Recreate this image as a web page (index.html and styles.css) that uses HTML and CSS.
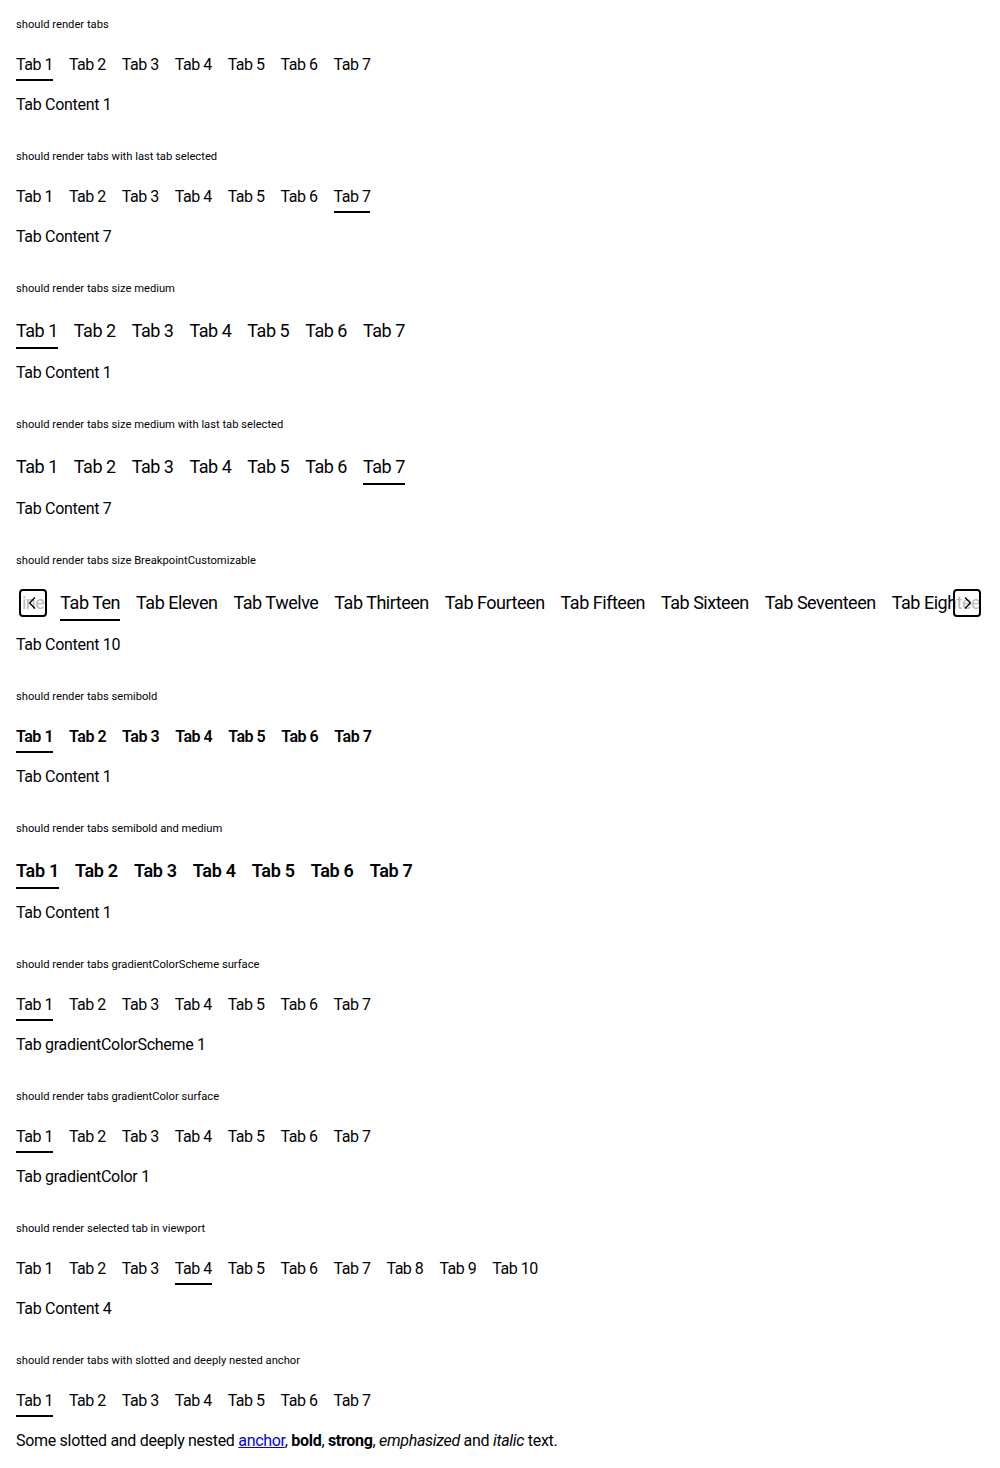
FILE: index.html
```html
<!DOCTYPE html>
<html lang="en">
<head>
<meta charset="utf-8">
<title>Tabs</title>
<link rel="stylesheet" href="styles.css">
</head>
<body>
<main class="page">

  <section class="demo">
    <p class="label">should render tabs</p>
    <div class="tabs">
      <button class="tab is-selected">Tab 1</button>
      <button class="tab">Tab 2</button>
      <button class="tab">Tab 3</button>
      <button class="tab">Tab 4</button>
      <button class="tab">Tab 5</button>
      <button class="tab">Tab 6</button>
      <button class="tab">Tab 7</button>
    </div>
    <p class="content">Tab Content 1</p>
  </section>

  <section class="demo">
    <p class="label">should render tabs with last tab selected</p>
    <div class="tabs">
      <button class="tab">Tab 1</button>
      <button class="tab">Tab 2</button>
      <button class="tab">Tab 3</button>
      <button class="tab">Tab 4</button>
      <button class="tab">Tab 5</button>
      <button class="tab">Tab 6</button>
      <button class="tab is-selected">Tab 7</button>
    </div>
    <p class="content">Tab Content 7</p>
  </section>

  <section class="demo">
    <p class="label">should render tabs size medium</p>
    <div class="tabs tabs-medium">
      <button class="tab is-selected">Tab 1</button>
      <button class="tab">Tab 2</button>
      <button class="tab">Tab 3</button>
      <button class="tab">Tab 4</button>
      <button class="tab">Tab 5</button>
      <button class="tab">Tab 6</button>
      <button class="tab">Tab 7</button>
    </div>
    <p class="content">Tab Content 1</p>
  </section>

  <section class="demo">
    <p class="label">should render tabs size medium with last tab selected</p>
    <div class="tabs tabs-medium">
      <button class="tab">Tab 1</button>
      <button class="tab">Tab 2</button>
      <button class="tab">Tab 3</button>
      <button class="tab">Tab 4</button>
      <button class="tab">Tab 5</button>
      <button class="tab">Tab 6</button>
      <button class="tab is-selected">Tab 7</button>
    </div>
    <p class="content">Tab Content 7</p>
  </section>

  <section class="demo">
    <p class="label">should render tabs size BreakpointCustomizable</p>
    <div class="scroller tabs-medium">
      <div class="scroll-area">
        <button class="tab">Tab One</button>
        <button class="tab">Tab Two</button>
        <button class="tab">Tab Three</button>
        <button class="tab">Tab Four</button>
        <button class="tab">Tab Five</button>
        <button class="tab">Tab Six</button>
        <button class="tab">Tab Seven</button>
        <button class="tab">Tab Eight</button>
        <button class="tab">Tab Nine</button>
        <button class="tab is-selected">Tab Ten</button>
        <button class="tab">Tab Eleven</button>
        <button class="tab">Tab Twelve</button>
        <button class="tab">Tab Thirteen</button>
        <button class="tab">Tab Fourteen</button>
        <button class="tab">Tab Fifteen</button>
        <button class="tab">Tab Sixteen</button>
        <button class="tab">Tab Seventeen</button>
        <button class="tab">Tab Eighteen</button>
        <button class="tab">Tab Nineteen</button>
        <button class="tab">Tab Twenty</button>
      </div>
      <div class="scroll-action scroll-prev">
        <button class="scroll-btn" aria-label="prev">
          <svg viewBox="0 0 24 24" width="24" height="24"><path d="M14 6.5 L8.6 12 L14 17.5" fill="none" stroke="#010205" stroke-width="1.3"/></svg>
        </button>
      </div>
      <div class="scroll-action scroll-next">
        <button class="scroll-btn" aria-label="next">
          <svg viewBox="0 0 24 24" width="24" height="24"><path d="M10 6.5 L15.4 12 L10 17.5" fill="none" stroke="#010205" stroke-width="1.3"/></svg>
        </button>
      </div>
    </div>
    <p class="content">Tab Content 10</p>
  </section>

  <section class="demo">
    <p class="label">should render tabs semibold</p>
    <div class="tabs tabs-semibold">
      <button class="tab is-selected">Tab 1</button>
      <button class="tab">Tab 2</button>
      <button class="tab">Tab 3</button>
      <button class="tab">Tab 4</button>
      <button class="tab">Tab 5</button>
      <button class="tab">Tab 6</button>
      <button class="tab">Tab 7</button>
    </div>
    <p class="content">Tab Content 1</p>
  </section>

  <section class="demo">
    <p class="label">should render tabs semibold and medium</p>
    <div class="tabs tabs-medium tabs-semibold">
      <button class="tab is-selected">Tab 1</button>
      <button class="tab">Tab 2</button>
      <button class="tab">Tab 3</button>
      <button class="tab">Tab 4</button>
      <button class="tab">Tab 5</button>
      <button class="tab">Tab 6</button>
      <button class="tab">Tab 7</button>
    </div>
    <p class="content">Tab Content 1</p>
  </section>

  <section class="demo">
    <p class="label">should render tabs gradientColorScheme surface</p>
    <div class="tabs">
      <button class="tab is-selected">Tab 1</button>
      <button class="tab">Tab 2</button>
      <button class="tab">Tab 3</button>
      <button class="tab">Tab 4</button>
      <button class="tab">Tab 5</button>
      <button class="tab">Tab 6</button>
      <button class="tab">Tab 7</button>
    </div>
    <p class="content">Tab gradientColorScheme 1</p>
  </section>

  <section class="demo">
    <p class="label">should render tabs gradientColor surface</p>
    <div class="tabs">
      <button class="tab is-selected">Tab 1</button>
      <button class="tab">Tab 2</button>
      <button class="tab">Tab 3</button>
      <button class="tab">Tab 4</button>
      <button class="tab">Tab 5</button>
      <button class="tab">Tab 6</button>
      <button class="tab">Tab 7</button>
    </div>
    <p class="content">Tab gradientColor 1</p>
  </section>

  <section class="demo">
    <p class="label">should render selected tab in viewport</p>
    <div class="tabs">
      <button class="tab">Tab 1</button>
      <button class="tab">Tab 2</button>
      <button class="tab">Tab 3</button>
      <button class="tab is-selected">Tab 4</button>
      <button class="tab">Tab 5</button>
      <button class="tab">Tab 6</button>
      <button class="tab">Tab 7</button>
      <button class="tab">Tab 8</button>
      <button class="tab">Tab 9</button>
      <button class="tab">Tab 10</button>
    </div>
    <p class="content">Tab Content 4</p>
  </section>

  <section class="demo">
    <p class="label">should render tabs with slotted and deeply nested anchor</p>
    <div class="tabs">
      <button class="tab is-selected">Tab 1</button>
      <button class="tab">Tab 2</button>
      <button class="tab">Tab 3</button>
      <button class="tab">Tab 4</button>
      <button class="tab">Tab 5</button>
      <button class="tab">Tab 6</button>
      <button class="tab">Tab 7</button>
    </div>
    <p class="content">Some slotted and deeply nested <a href="#" class="link">anchor</a>, <b>bold</b>, <strong>strong</strong>, <em>emphasized</em> and <i>italic</i> text.</p>
  </section>

</main>
<script src="script.js"></script>
</body>
</html>
```

FILE: styles.css
```css
html, body {
  margin: 0;
  padding: 0;
  background: #ffffff;
}

body {
  font-family: "Roboto", "Liberation Sans", sans-serif;
  color: #010205;
  letter-spacing: -0.03em;
}

.page {
  padding: 17px 16px 15px;
  display: flex;
  flex-direction: column;
  gap: 32px;
}

.demo {
  display: flex;
  flex-direction: column;
}

.label {
  margin: 0 0 20px;
  font-size: 11.2px;
  line-height: 15px;
  padding-bottom: 1px;
  letter-spacing: 0;
}

.tabs {
  display: flex;
  gap: 16px;
  margin-bottom: 12px;
}

.tab {
  font-family: inherit;
  letter-spacing: inherit;
  color: inherit;
  font-size: 16px;
  line-height: 24px;
  font-weight: 400;
  margin: 0;
  padding: 0 0 2px;
  background: none;
  border: 0;
  border-bottom: 2px solid transparent;
  white-space: nowrap;
  flex: none;
  cursor: pointer;
}

.tab.is-selected {
  border-bottom-color: #010205;
}

.tabs-medium .tab {
  font-size: 18px;
  line-height: 28px;
}

.tabs-semibold .tab {
  font-weight: 600;
}

.tabs-medium.tabs-semibold .tab {
  letter-spacing: -0.016em;
}

.content {
  margin: 0;
  font-size: 16px;
  line-height: 24px;
  letter-spacing: -0.3px;
}

.link {
  color: #0000ee;
  text-decoration: underline;
}

/* scrollable tabs */
.scroller {
  position: relative;
  margin-bottom: 12px;
}

.scroll-area {
  position: relative;
  display: flex;
  gap: 16px;
  overflow: hidden;
}

.scroll-action {
  position: absolute;
  top: 0;
  height: 28px;
  display: flex;
  align-items: center;
}

.scroll-prev {
  left: 0;
  padding-left: 3px;
  background: linear-gradient(to right, #ffffff 0 3px, transparent 3px);
}

.scroll-next {
  right: 0;
  padding-right: 3px;
  background: linear-gradient(to left, #ffffff 0 3px, transparent 3px);
}

.scroll-btn {
  width: 28px;
  height: 28px;
  margin: 0;
  padding: 0;
  box-sizing: border-box;
  border: 2px solid #010205;
  border-radius: 4px;
  background: rgba(255, 255, 255, 0.72);
  display: flex;
  align-items: center;
  justify-content: center;
  cursor: pointer;
}

.scroll-btn svg {
  display: block;
}
```

FILE: script.js
```js
document.querySelectorAll('.scroll-area').forEach(function (area) {
  var selected = area.querySelector('.is-selected');
  if (selected) {
    area.scrollLeft = selected.offsetLeft - 44;
  }
});
```
